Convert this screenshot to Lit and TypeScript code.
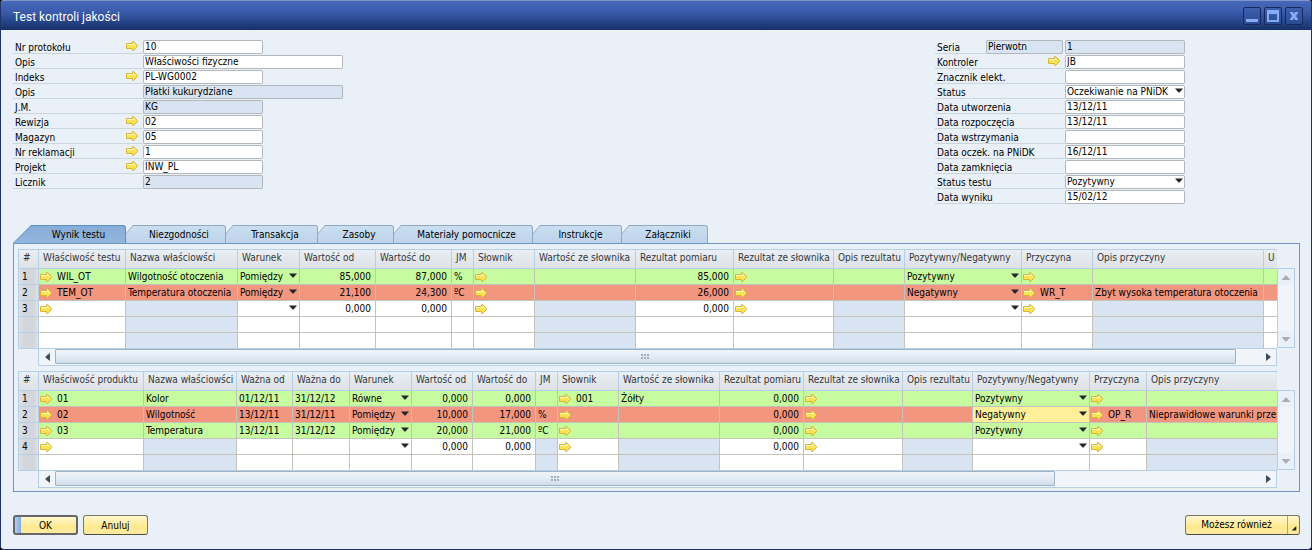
import { LitElement, html, css, svg, nothing } from "lit";
import { customElement, property } from "lit/decorators.js";
import { classMap } from "lit/directives/class-map.js";
import { styleMap } from "lit/directives/style-map.js";

const base = css`
  * {
    box-sizing: border-box;
  }
  input,
  select,
  button {
    font: inherit;
    color: inherit;
    margin: 0;
    border-radius: 0;
    outline: none;
  }
  .combo {
    display: grid;
    align-items: center;
    min-width: 0;
  }
  .combo > * {
    grid-area: 1 / 1;
  }
  .combo select {
    appearance: none;
    width: 100%;
    border: 0;
    background: none;
  }
  .combo svg {
    justify-self: end;
    margin-right: 2px;
    margin-bottom: 3px;
    pointer-events: none;
  }
`;

const linkArrow = html`<svg class="link" width="12" height="10" viewBox="0 0 12 10" aria-hidden="true">
  <path d="M0.5 2.5H6.5V0.5H7.5L11.5 4.5V5.5L7.5 9.5H6.5V7.5H0.5Z" fill="#fbe251" stroke="#d8b53a" />
  <path d="M1 3.5H7.5V2.5L9.5 4.5" fill="none" stroke="#fffbcb" />
</svg>`;

const dropArrow = html`<svg width="8" height="5" viewBox="0 0 8 5" aria-hidden="true">
  <path d="M0 0.5H8L4.5 4.5H3.5Z" fill="#23272c" />
</svg>`;

interface Field {
  label: string;
  value: string;
  link?: boolean;
  locked?: boolean;
  wide?: boolean;
  combo?: boolean;
  prefix?: string;
}

const leftFields: Field[] = [
  { label: "Nr protokołu", value: "10", link: true },
  { label: "Opis", value: "Właściwości fizyczne", wide: true },
  { label: "Indeks", value: "PL-WG0002", link: true },
  { label: "Opis", value: "Płatki kukurydziane", wide: true, locked: true },
  { label: "J.M.", value: "KG", locked: true },
  { label: "Rewizja", value: "02", link: true },
  { label: "Magazyn", value: "05", link: true },
  { label: "Nr reklamacji", value: "1", link: true },
  { label: "Projekt", value: "INW_PL", link: true },
  { label: "Licznik", value: "2", locked: true },
];

const rightFields: Field[] = [
  { label: "Seria", value: "1", locked: true, prefix: "Pierwotn" },
  { label: "Kontroler", value: "JB", link: true },
  { label: "Znacznik elekt.", value: "" },
  { label: "Status", value: "Oczekiwanie na PNiDK", combo: true },
  { label: "Data utworzenia", value: "13/12/11" },
  { label: "Data rozpoczęcia", value: "13/12/11" },
  { label: "Data wstrzymania", value: "" },
  { label: "Data oczek. na PNiDK", value: "16/12/11" },
  { label: "Data zamknięcia", value: "" },
  { label: "Status testu", value: "Pozytywny", combo: true },
  { label: "Data wyniku", value: "15/02/12" },
];

@customElement("field-list")
class FieldList extends LitElement {
  @property({ attribute: false }) fields: Field[] = [];

  static styles = [
    base,
    css`
      :host {
        display: flex;
        flex-direction: column;
        gap: 1px;
      }
      .row {
        display: flex;
        height: 14px;
      }
      .name {
        display: flex;
        width: 130px;
        border-bottom: 1px solid #cdd5dc;
        padding-right: 5px;
      }
      .name.paired {
        width: 51px;
      }
      label {
        flex: 1;
        padding-left: 2px;
        line-height: 15px;
        white-space: nowrap;
      }
      .link {
        margin-top: 1px;
      }
      .box {
        width: 120px;
        height: 14px;
        border: 0;
        box-shadow: inset 0 0 0 1px #b3b8bd;
        border-radius: 2px;
        background: #fff;
        padding: 0 2px;
        line-height: 14px;
      }
      .box.wide {
        width: 200px;
      }
      .box.short {
        width: 77px;
        margin-right: 2px;
      }
      .box.locked {
        background: #d9e4f2;
      }
      .box.combo {
        padding: 0;
      }
      .combo select {
        height: 14px;
        padding: 0 2px;
        line-height: 14px;
      }
    `,
  ];

  render() {
    return this.fields.map((f, i) => {
      const id = `f${i}`;
      return html`<div class="row">
        <div class=${classMap({ name: true, paired: !!f.prefix })}>
          <label for=${id}>${f.label}</label>${f.link ? linkArrow : nothing}
        </div>
        ${f.prefix
          ? html`<input class="box short locked" aria-label="Seria, nazwa" readonly .value=${f.prefix} />`
          : nothing}
        ${f.combo
          ? html`<div class="box combo">
              <select id=${id}>
                <option>${f.value}</option></select
              >${dropArrow}
            </div>`
          : html`<input
              id=${id}
              class=${classMap({ box: true, wide: !!f.wide, locked: !!f.locked })}
              ?readonly=${f.locked}
              .value=${f.value}
            />`}
      </div>`;
    });
  }
}

type Kind = "text" | "link" | "num" | "combo";
interface Column {
  title: string;
  width?: number;
  kind?: Kind;
  locked?: boolean;
}
interface Line {
  tone?: "good" | "bad";
  cells: string[];
  focus?: number;
}

const testColumns: Column[] = [
  { title: "Właściwość testu", width: 87, kind: "link" },
  { title: "Nazwa właściowści", width: 112, locked: true },
  { title: "Warunek", width: 62, kind: "combo" },
  { title: "Wartość od", width: 76, kind: "num" },
  { title: "Wartość do", width: 76, kind: "num" },
  { title: "JM", width: 22 },
  { title: "Słownik", width: 61, kind: "link" },
  { title: "Wartość ze słownika", width: 101, locked: true },
  { title: "Rezultat pomiaru", width: 98, kind: "num" },
  { title: "Rezultat ze słownika", width: 100, kind: "link" },
  { title: "Opis rezultatu", width: 71, locked: true },
  { title: "Pozytywny/Negatywny", width: 117, kind: "combo" },
  { title: "Przyczyna", width: 71, kind: "link" },
  { title: "Opis przyczyny", width: 171, locked: true },
  { title: "U" },
];
const testLines: Line[] = [
  {
    tone: "good",
    cells: ["WIL_OT", "Wilgotność otoczenia", "Pomiędzy", "85,000", "87,000", "%", "", "", "85,000", "", "", "Pozytywny", "", "", ""],
  },
  {
    tone: "bad",
    cells: ["TEM_OT", "Temperatura otoczenia", "Pomiędzy", "21,100", "24,300", "ºC", "", "", "26,000", "", "", "Negatywny", "WR_T", "Zbyt wysoka temperatura otoczenia", ""],
  },
  { cells: ["", "", "", "0,000", "0,000", "", "", "", "0,000", "", "", "", "", "", ""] },
];

const productColumns: Column[] = [
  { title: "Właściwość produktu", width: 105, kind: "link" },
  { title: "Nazwa właściowści", width: 93, locked: true },
  { title: "Ważna od", width: 56 },
  { title: "Ważna do", width: 57 },
  { title: "Warunek", width: 62, kind: "combo" },
  { title: "Wartość od", width: 61, kind: "num" },
  { title: "Wartość do", width: 63, kind: "num" },
  { title: "JM", width: 22, locked: true },
  { title: "Słownik", width: 61, kind: "link" },
  { title: "Wartość ze słownika", width: 101, locked: true },
  { title: "Rezultat pomiaru", width: 84, kind: "num" },
  { title: "Rezultat ze słownika", width: 99, kind: "link" },
  { title: "Opis rezultatu", width: 70, locked: true },
  { title: "Pozytywny/Negatywny", width: 117, kind: "combo" },
  { title: "Przyczyna", width: 57, kind: "link" },
  { title: "Opis przyczyny", locked: true },
];
const productLines: Line[] = [
  {
    tone: "good",
    cells: ["01", "Kolor", "01/12/11", "31/12/12", "Równe", "0,000", "0,000", "", "001", "Żółty", "0,000", "", "", "Pozytywny", "", ""],
  },
  {
    tone: "bad",
    focus: 13,
    cells: ["02", "Wilgotność", "13/12/11", "31/12/11", "Pomiędzy", "10,000", "17,000", "%", "", "", "0,000", "", "", "Negatywny", "OP_R", "Nieprawidłowe warunki prze"],
  },
  {
    tone: "good",
    cells: ["03", "Temperatura", "13/12/11", "31/12/12", "Pomiędzy", "20,000", "21,000", "ºC", "", "", "0,000", "", "", "Pozytywny", "", ""],
  },
  { cells: ["", "", "", "", "", "0,000", "0,000", "", "", "", "0,000", "", "", "", "", ""] },
];

@customElement("data-grid")
class DataGrid extends LitElement {
  @property({ attribute: false }) columns: Column[] = [];
  @property({ attribute: false }) lines: Line[] = [];
  @property({ type: Number }) thumb = 100;

  static styles = [
    base,
    css`
      :host {
        display: grid;
        grid-template-columns: minmax(0, 1fr) 18px;
      }
      table {
        width: 100%;
        table-layout: fixed;
        border-collapse: separate;
        border-spacing: 0;
        border-top: 1px solid #b5cfe8;
      }
      th,
      td {
        padding: 0;
        overflow: hidden;
        white-space: nowrap;
        text-align: left;
        font-weight: normal;
      }
      thead th {
        height: 19px;
        padding: 0 0 2px 4px;
        line-height: 16px;
        color: #33373c;
        border-right: 1px solid #b5cfe8;
        border-bottom: 1px solid #b5cfe8;
        background: linear-gradient(#e9eff5, #e2e6ea 60%, #dfe3e6);
      }
      thead th:last-child {
        border-right-color: #e2e6ea;
      }
      thead th:first-child,
      tbody th {
        border-left: 1px solid #b5cfe8;
      }
      tbody th {
        height: 16px;
        padding-left: 3px;
        line-height: 15px;
        border-right: 1px solid #b5cfe8;
        border-bottom: 1px solid #b5cfe8;
        background: linear-gradient(90deg, #dde1e5, #d3d7db 30%, #d3d7db 80%, #dfe3e7);
      }
      td {
        height: 16px;
        padding: 0 0 0 2px;
        line-height: 15px;
        background: #fff;
        border-right: 1px solid #c3c3b9;
        border-bottom: 1px solid #c3c3b9;
      }
      td:last-child {
        border-right: 0;
      }
      tbody tr:last-child > * {
        border-bottom-color: #b5cfe8;
      }
      .locked {
        background: #d9e4f2;
      }
      .good td {
        background: #c6fba0;
      }
      .bad td {
        background: #f29680;
      }
      .bad td.focus {
        background: #ffef98;
      }
      td.num {
        text-align: right;
        padding-right: 4px;
      }
      td.drop {
        padding: 0;
      }
      .combo select {
        height: 15px;
        padding: 0 2px;
        line-height: 15px;
      }
      .ref {
        display: flex;
        align-items: center;
        gap: 5px;
        height: 15px;
        margin-left: -1px;
      }
      .vbar {
        margin-top: 19px;
        border: 1px solid #b5cfe8;
        background: #f1f5f9;
        height: 80px;
        display: flex;
        flex-direction: column;
        justify-content: space-between;
      }
      .step {
        display: grid;
        place-items: center;
        width: 16px;
        height: 16px;
        padding: 0;
        border: 0;
        background: #e9f0f7;
      }
      .hbar {
        display: flex;
        margin-left: 20px;
        height: 17px;
        border: solid #b5cfe8;
        border-width: 0 1px 1px;
        background: #f1f5f9;
      }
      .hbar .step {
        background: #f1f5f9;
      }
      .track {
        flex: 1;
        min-width: 0;
      }
      .thumb {
        display: grid;
        place-items: center;
        height: 15px;
        border: 1px solid #9db3c5;
        border-radius: 1px;
        background: linear-gradient(#f0f5fa, #e3ecf5 50%, #cfddea);
      }
    `,
  ];

  private cell(col: Column, value: string) {
    if (col.kind === "combo") {
      return html`<div class="combo">
        <select aria-label=${col.title}>
          <option>${value}</option></select
        >${dropArrow}
      </div>`;
    }
    if (col.kind === "link") {
      return html`<div class="ref">${linkArrow}<span>${value}</span></div>`;
    }
    return value;
  }

  render() {
    const rows: (Line | undefined)[] = [...this.lines];
    while (rows.length < 5) rows.push(undefined);
    return html`
      <table>
        <colgroup>
          <col style="width:21px" />
          ${this.columns.map((c) => html`<col style=${styleMap(c.width ? { width: `${c.width}px` } : {})} />`)}
        </colgroup>
        <thead>
          <tr>
            <th scope="col">#</th>
            ${this.columns.map((c) => html`<th scope="col">${c.title}</th>`)}
          </tr>
        </thead>
        <tbody>
          ${rows.map(
            (r, i) => html`<tr class=${r?.tone ?? ""}>
              <th scope="row">${r ? i + 1 : nothing}</th>
              ${this.columns.map(
                (c, j) =>
                  html`<td
                    class=${classMap({
                      locked: !!c.locked,
                      num: c.kind === "num",
                      drop: c.kind === "combo",
                      focus: r?.focus === j,
                    })}
                  >${r ? this.cell(c, r.cells[j]) : nothing}</td>`,
              )}
            </tr>`,
          )}
        </tbody>
      </table>
      <div class="vbar">
        <button class="step" aria-label="W górę">
          <svg width="10" height="5"><path d="M0.5 5L4.5 0.5H5.5L9.5 5Z" fill="#a9aeb4" /></svg>
        </button>
        <button class="step" aria-label="W dół">
          <svg width="10" height="5"><path d="M0.5 0L4.5 4.5H5.5L9.5 0Z" fill="#a9aeb4" /></svg>
        </button>
      </div>
      <div class="hbar">
        <button class="step" aria-label="W lewo">
          <svg width="5" height="8"><path d="M5 0V8L0.5 4.5V3.5Z" fill="#3c4f60" /></svg>
        </button>
        <div class="track">
          <div class="thumb" style=${styleMap({ width: `${this.thumb}%` })}>
            <svg width="8" height="5">
              ${[0, 3, 6].map((x) => [0, 3].map((y) => svg`<rect x=${x} y=${y} width="2" height="2" fill="#a3afbb" />`))}
            </svg>
          </div>
        </div>
        <button class="step" aria-label="W prawo">
          <svg width="5" height="8"><path d="M0 0V8L4.5 4.5V3.5Z" fill="#3c4f60" /></svg>
        </button>
      </div>
    `;
  }
}

const tabs: [string, number][] = [
  ["Wynik testu", 113],
  ["Niezgodności", 100],
  ["Transakcja", 92],
  ["Zasoby", 76],
  ["Materiały pomocnicze", 139],
  ["Instrukcje", 89],
  ["Załączniki", 86],
];

@customElement("app-root")
class AppRoot extends LitElement {
  static styles = [
    base,
    css`
      :host {
        display: block;
        min-height: 100vh;
        background: #000;
        font: 10px "DejaVu Sans Condensed", "Noto Sans", sans-serif;
        color: #000;
      }
      .window {
        min-height: 100vh;
        display: flex;
        flex-direction: column;
        background: #e9f0f7;
        border: 1px solid #1f3568;
        border-top: 0;
        border-radius: 4px;
        overflow: hidden;
      }
      header {
        display: flex;
        align-items: center;
        justify-content: space-between;
        height: 30px;
        padding: 0 8px 0 12px;
        border-top: 1px solid #7d97cb;
        background: linear-gradient(#4768b8, #3c5dad 35%, #29498f 65%, #1b3570 92%, #15306a);
      }
      h1 {
        margin: 0;
        padding-top: 2px;
        font: 12px Roboto, "Noto Sans", sans-serif;
        color: #fff;
      }
      .controls {
        display: flex;
        gap: 3px;
      }
      .controls button {
        display: grid;
        place-items: center;
        width: 18px;
        height: 18px;
        padding: 0;
        border: 1px solid #15295c;
        border-radius: 2px;
        background: linear-gradient(#3f5fae, #2b4a94);
      }
      main {
        flex: 1;
        display: flex;
        flex-direction: column;
        padding: 10px 11px 14px 12px;
      }
      .form {
        display: flex;
        justify-content: space-between;
        align-items: flex-start;
        padding-right: 115px;
        margin-bottom: 21px;
      }
      .tabs {
        display: flex;
      }
      .tab {
        position: relative;
        z-index: 0;
        height: 18px;
        padding: 1px 0 0 6px;
        border: 0;
        border-radius: 0 3px 0 0;
        background: #8fa9c6;
        clip-path: polygon(0 8px, 7px 0, 100% 0, 100% 100%, 0 100%);
      }
      .tab::before {
        content: "";
        position: absolute;
        inset: 1px 1px 0 0;
        z-index: -1;
        border-radius: 0 2px 0 0;
        background: linear-gradient(#cbdef0, #bdd3ea);
        clip-path: polygon(0 8px, 7px 0, 100% 0, 100% 100%, 0 100%);
      }
      .tab.active {
        background: #5f8ec2;
        padding-left: 18px;
        clip-path: polygon(0 100%, 18px 0, 100% 0, 100% 100%);
      }
      .tab.active::before {
        background: linear-gradient(#86acd8, #93b6dd);
        clip-path: polygon(1px 100%, 18px 0, 100% 0, 100% 100%);
      }
      .panel {
        display: flex;
        flex-direction: column;
        gap: 5px;
        border: 1px solid #6d96c3;
        padding: 5px 4px 3px;
      }
      footer {
        display: flex;
        gap: 5px;
        margin-top: auto;
      }
      .push {
        width: 65px;
        height: 20px;
        padding: 0;
        border: 1px solid #7b756a;
        border-bottom-color: #4f4b45;
        border-radius: 3px;
        background: linear-gradient(#fff7cf, #ffed9f 45%, #ffe98e 60%, #fdeaa0);
      }
      .push.main {
        border: 2px solid #66666a;
        background: linear-gradient(90deg, #b5cdec, #83abdf 6px, transparent 6px),
          linear-gradient(#fff7cf, #ffed9f 45%, #ffe98e 60%, #fdeaa0);
      }
      .push.more {
        display: flex;
        align-items: stretch;
        width: 115px;
        margin-left: auto;
      }
      .more span {
        flex: 1;
        line-height: 18px;
      }
      .more svg {
        width: 12px;
        height: 18px;
        border-left: 1px solid #b7a765;
      }
    `,
  ];

  render() {
    return html`<div class="window">
      <header>
        <h1>Test kontroli jakości</h1>
        <div class="controls">
          <button aria-label="Minimalizuj">
            <svg width="16" height="16"><path d="M2 11H14V14H2Z" fill="#86abf5" /></svg>
          </button>
          <button aria-label="Maksymalizuj">
            <svg width="16" height="16">
              <path d="M2 2H14V14H2ZM4 6V12H12V6Z" fill="#86abf5" fill-rule="evenodd" />
            </svg>
          </button>
          <button aria-label="Zamknij">
            <svg width="16" height="16">
              <path d="M4 4H7L8 6L9 4H12V5L10 8L12 11V12H9L8 10L7 12H4V11L6 8L4 5Z" fill="#86abf5" />
            </svg>
          </button>
        </div>
      </header>
      <main>
        <div class="form">
          <field-list .fields=${leftFields}></field-list>
          <field-list .fields=${rightFields}></field-list>
        </div>
        <div class="tabs" role="tablist">
          ${tabs.map(
            ([name, width], i) =>
              html`<button
                role="tab"
                aria-selected=${i === 0}
                class=${classMap({ tab: true, active: i === 0 })}
                style=${styleMap({ width: `${width}px` })}
              >${name}</button>`,
          )}
        </div>
        <div class="panel">
          <data-grid .columns=${testColumns} .lines=${testLines} thumb="98"></data-grid>
          <data-grid .columns=${productColumns} .lines=${productLines} thumb="83"></data-grid>
        </div>
        <footer>
          <button class="push main">OK</button>
          <button class="push">Anuluj</button>
          <button class="push more">
            <span>Możesz również</span>
            <svg viewBox="0 0 12 18" aria-hidden="true"><path d="M9 10V15H4Z" fill="#23272c" /></svg>
          </button>
        </footer>
      </main>
    </div>`;
  }
}
